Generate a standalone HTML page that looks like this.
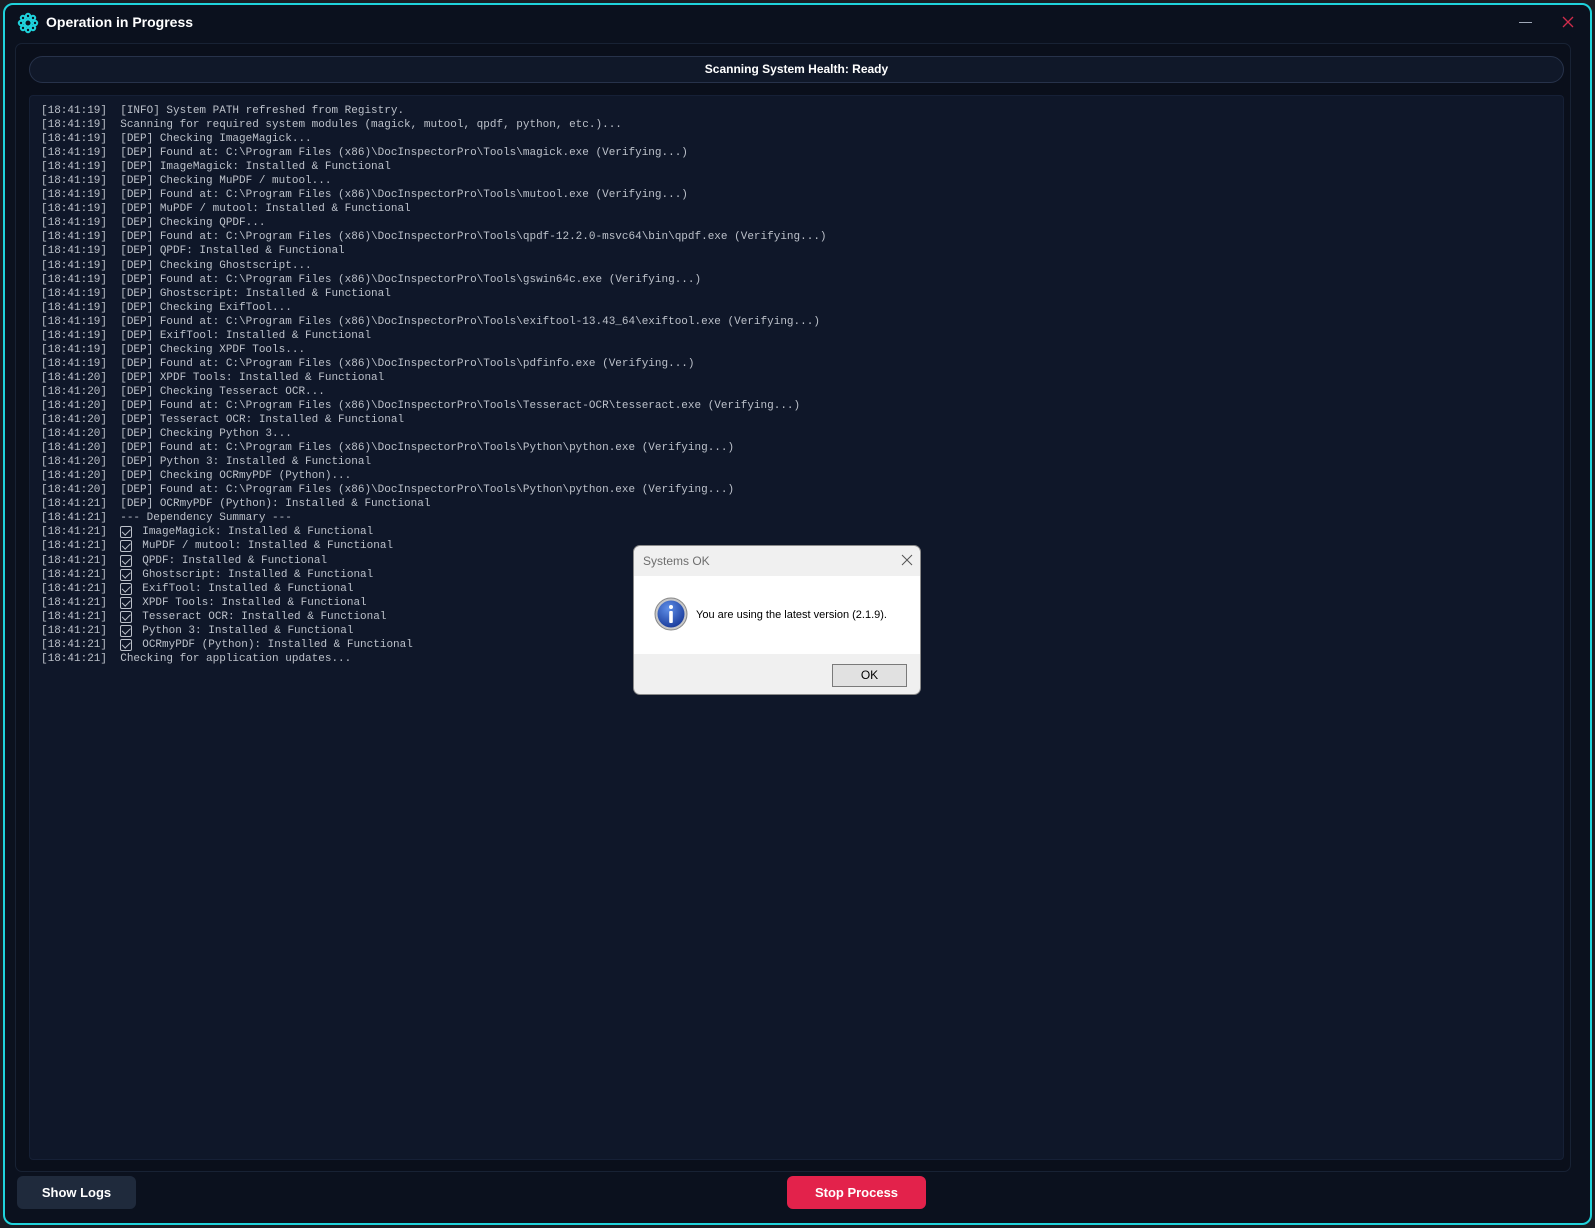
<!DOCTYPE html>
<html><head><meta charset="utf-8"><style>
*{margin:0;padding:0;box-sizing:border-box}
html,body{width:1595px;height:1228px;background:#1a1d24;overflow:hidden}
.win{position:absolute;left:3px;top:3px;width:1589px;height:1222px;background:#0b111e;border:2px solid #1fd3dc;border-radius:10px}
.title{position:absolute;left:46px;top:14px;font:bold 14px "Liberation Sans",sans-serif;color:#fff}
.panel{position:absolute;left:15px;top:43px;width:1556px;height:1129px;border:1px solid #182234;border-radius:7px;background:#0a0f1b}
.status{position:absolute;left:29px;top:56px;width:1535px;height:27px;border:1px solid #27324a;border-radius:14px;background:#101829;color:#fff;font:bold 12px "Liberation Sans",sans-serif;text-align:center;line-height:25px}
.log{position:absolute;left:29px;top:95px;width:1535px;height:1065px;background:#0f1729;border:1px solid #162036;border-radius:4px}
pre{position:absolute;left:41px;top:104px;font:11px/14.05px "Liberation Mono",monospace;color:#bcc1ca;white-space:pre}
.cb{display:inline-block;width:12px;height:12px;border:1.5px solid #bcc1ca;border-radius:2px;vertical-align:top;margin-top:1px;margin-right:10px;position:relative}
.cb:after{content:"";position:absolute;left:3px;top:0px;width:3.5px;height:6.5px;border:solid #bcc1ca;border-width:0 1.5px 1.5px 0;transform:rotate(45deg)}
.btn{position:absolute;top:1176px;height:33px;border-radius:6px;color:#fff;font:bold 13px "Liberation Sans",sans-serif;text-align:center;line-height:33px}
.dlg{position:absolute;left:633px;top:545px;width:288px;height:150px;background:#f0f0f0;border:1px solid #8a8a8a;border-radius:7px;overflow:hidden;font-family:"Liberation Sans",sans-serif}
</style></head><body>
<div class="win"></div>
<svg style="position:absolute;left:17px;top:12px" width="22" height="22" viewBox="0 0 22 22" fill="none" stroke="#1fd3dc" stroke-width="2">
<circle cx="11" cy="11" r="3.5"/>
<circle cx="11" cy="4" r="2.2"/><circle cx="11" cy="18" r="2.2"/><circle cx="4" cy="11" r="2.2"/><circle cx="18" cy="11" r="2.2"/>
<circle cx="6" cy="6" r="2.2"/><circle cx="16" cy="6" r="2.2"/><circle cx="6" cy="16" r="2.2"/><circle cx="16" cy="16" r="2.2"/>
</svg>
<div class="title">Operation in Progress</div>
<div style="position:absolute;left:1519px;top:22px;width:13px;height:1px;background:#a0a8b8"></div>
<svg style="position:absolute;left:1562px;top:16px" width="12" height="12" viewBox="0 0 12 12" stroke="#d02c4c" stroke-width="1.3"><path d="M1 1L11 11M11 1L1 11"/></svg>
<div class="panel"></div>
<div class="status">Scanning System Health: Ready</div>
<div class="log"></div>
<pre>[18:41:19]  [INFO] System PATH refreshed from Registry.
[18:41:19]  Scanning for required system modules (magick, mutool, qpdf, python, etc.)...
[18:41:19]  [DEP] Checking ImageMagick...
[18:41:19]  [DEP] Found at: C:\Program Files (x86)\DocInspectorPro\Tools\magick.exe (Verifying...)
[18:41:19]  [DEP] ImageMagick: Installed &amp; Functional
[18:41:19]  [DEP] Checking MuPDF / mutool...
[18:41:19]  [DEP] Found at: C:\Program Files (x86)\DocInspectorPro\Tools\mutool.exe (Verifying...)
[18:41:19]  [DEP] MuPDF / mutool: Installed &amp; Functional
[18:41:19]  [DEP] Checking QPDF...
[18:41:19]  [DEP] Found at: C:\Program Files (x86)\DocInspectorPro\Tools\qpdf-12.2.0-msvc64\bin\qpdf.exe (Verifying...)
[18:41:19]  [DEP] QPDF: Installed &amp; Functional
[18:41:19]  [DEP] Checking Ghostscript...
[18:41:19]  [DEP] Found at: C:\Program Files (x86)\DocInspectorPro\Tools\gswin64c.exe (Verifying...)
[18:41:19]  [DEP] Ghostscript: Installed &amp; Functional
[18:41:19]  [DEP] Checking ExifTool...
[18:41:19]  [DEP] Found at: C:\Program Files (x86)\DocInspectorPro\Tools\exiftool-13.43_64\exiftool.exe (Verifying...)
[18:41:19]  [DEP] ExifTool: Installed &amp; Functional
[18:41:19]  [DEP] Checking XPDF Tools...
[18:41:19]  [DEP] Found at: C:\Program Files (x86)\DocInspectorPro\Tools\pdfinfo.exe (Verifying...)
[18:41:20]  [DEP] XPDF Tools: Installed &amp; Functional
[18:41:20]  [DEP] Checking Tesseract OCR...
[18:41:20]  [DEP] Found at: C:\Program Files (x86)\DocInspectorPro\Tools\Tesseract-OCR\tesseract.exe (Verifying...)
[18:41:20]  [DEP] Tesseract OCR: Installed &amp; Functional
[18:41:20]  [DEP] Checking Python 3...
[18:41:20]  [DEP] Found at: C:\Program Files (x86)\DocInspectorPro\Tools\Python\python.exe (Verifying...)
[18:41:20]  [DEP] Python 3: Installed &amp; Functional
[18:41:20]  [DEP] Checking OCRmyPDF (Python)...
[18:41:20]  [DEP] Found at: C:\Program Files (x86)\DocInspectorPro\Tools\Python\python.exe (Verifying...)
[18:41:21]  [DEP] OCRmyPDF (Python): Installed &amp; Functional
[18:41:21]  --- Dependency Summary ---
[18:41:21]  <span class="cb"></span>ImageMagick: Installed &amp; Functional
[18:41:21]  <span class="cb"></span>MuPDF / mutool: Installed &amp; Functional
[18:41:21]  <span class="cb"></span>QPDF: Installed &amp; Functional
[18:41:21]  <span class="cb"></span>Ghostscript: Installed &amp; Functional
[18:41:21]  <span class="cb"></span>ExifTool: Installed &amp; Functional
[18:41:21]  <span class="cb"></span>XPDF Tools: Installed &amp; Functional
[18:41:21]  <span class="cb"></span>Tesseract OCR: Installed &amp; Functional
[18:41:21]  <span class="cb"></span>Python 3: Installed &amp; Functional
[18:41:21]  <span class="cb"></span>OCRmyPDF (Python): Installed &amp; Functional
[18:41:21]  Checking for application updates...</pre>
<div class="btn" style="left:17px;width:119px;background:#1f2a3c">Show Logs</div>
<div class="btn" style="left:787px;width:139px;background:#e3224b">Stop Process</div>
<div class="dlg">
  <div style="position:absolute;left:9px;top:8px;font-size:12px;color:#6e6e6e">Systems OK</div>
  <svg style="position:absolute;left:267px;top:8px" width="12" height="12" viewBox="0 0 12 12" stroke="#555" stroke-width="1"><path d="M1 1L11 11M11 1L1 11"/></svg>
  <div style="position:absolute;left:0;top:30px;width:288px;height:78px;background:#fff"></div>
  <svg style="position:absolute;left:20px;top:51px" width="34" height="34" viewBox="0 0 34 34">
    <defs><radialGradient id="g" cx="40%" cy="30%" r="70%"><stop offset="0" stop-color="#5f8fe8"/><stop offset="1" stop-color="#1d3f9e"/></radialGradient></defs>
    <circle cx="17" cy="17" r="16" fill="#c8c8c8" stroke="#888" stroke-width="1"/>
    <circle cx="17" cy="17" r="13.5" fill="url(#g)"/>
    <circle cx="17" cy="10" r="2" fill="#fff"/>
    <rect x="15.2" y="14" width="3.6" height="12" rx="1" fill="#fff"/>
  </svg>
  <div style="position:absolute;left:62px;top:63px;font-size:11px;color:#000">You are using the latest version (2.1.9).</div>
  <div style="position:absolute;left:198px;top:118px;width:75px;height:23px;border:1px solid #7a7a7a;background:#e1e1e1;font-size:12px;text-align:center;line-height:21px;color:#000">OK</div>
</div>
</body></html>
